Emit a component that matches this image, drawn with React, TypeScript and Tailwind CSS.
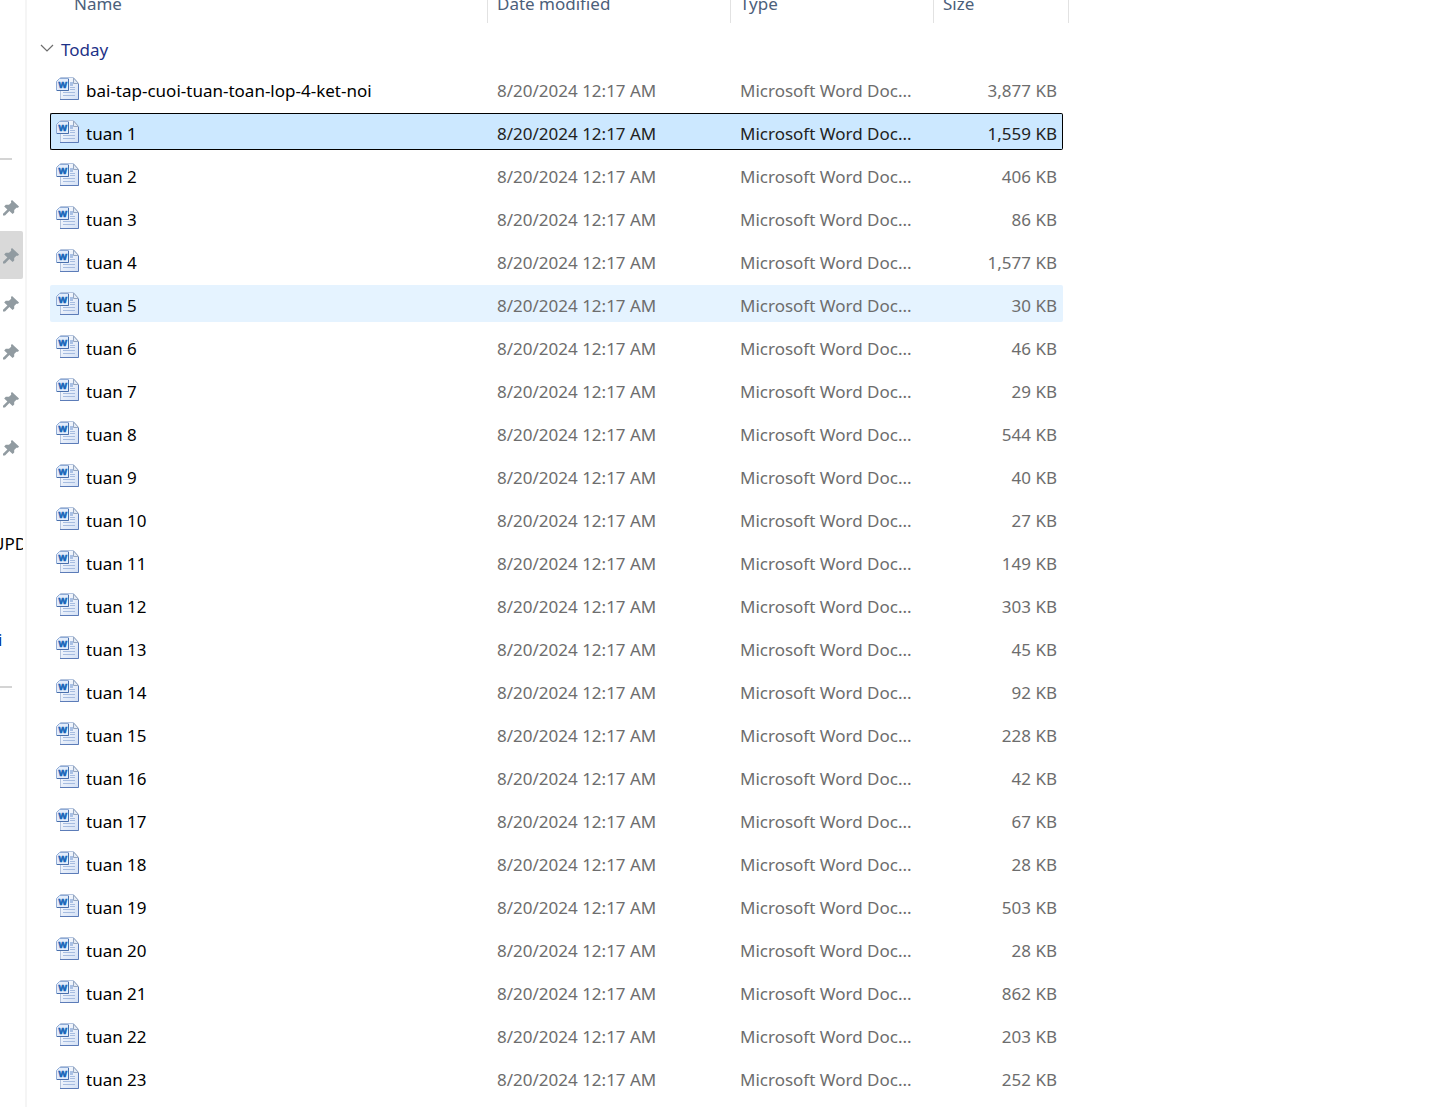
import clsx from "clsx";

interface FileRow {
  name: string;
  size: string;
}

const files: FileRow[] = [
  { name: "bai-tap-cuoi-tuan-toan-lop-4-ket-noi", size: "3,877 KB" },
  { name: "tuan 1", size: "1,559 KB" },
  { name: "tuan 2", size: "406 KB" },
  { name: "tuan 3", size: "86 KB" },
  { name: "tuan 4", size: "1,577 KB" },
  { name: "tuan 5", size: "30 KB" },
  { name: "tuan 6", size: "46 KB" },
  { name: "tuan 7", size: "29 KB" },
  { name: "tuan 8", size: "544 KB" },
  { name: "tuan 9", size: "40 KB" },
  { name: "tuan 10", size: "27 KB" },
  { name: "tuan 11", size: "149 KB" },
  { name: "tuan 12", size: "303 KB" },
  { name: "tuan 13", size: "45 KB" },
  { name: "tuan 14", size: "92 KB" },
  { name: "tuan 15", size: "228 KB" },
  { name: "tuan 16", size: "42 KB" },
  { name: "tuan 17", size: "67 KB" },
  { name: "tuan 18", size: "28 KB" },
  { name: "tuan 19", size: "503 KB" },
  { name: "tuan 20", size: "28 KB" },
  { name: "tuan 21", size: "862 KB" },
  { name: "tuan 22", size: "203 KB" },
  { name: "tuan 23", size: "252 KB" },
];

const SELECTED = "tuan 1";
const HOVERED = "tuan 5";

const WordIcon = () => (
  <svg className="size-6 shrink-0" viewBox="0 0 24 24" aria-hidden="true">
    <defs>
      <linearGradient id="page" x1="0" y1="0" x2="1" y2="1">
        <stop offset="0" stopColor="#ffffff" />
        <stop offset="1" stopColor="#d3e0f5" />
      </linearGradient>
    </defs>
    <path d="M4.5 0.5H17.5L22.5 6.5V22.5H4.5Z" fill="url(#page)" stroke="#b4c4de" />
    <path d="M4 22.5H22.5V7" fill="none" stroke="#5c7cb8" />
    <path d="M17.5 1V6.5H22.5Z" fill="#e4ebf5" stroke="#95a7c2" />
    <path d="M14 5H17V9H14Z" fill="#a9c0e4" />
    <path d="M14 10.5H19M14 12.5H19M7 15.5H19M7 18.5H19" stroke="#a6bce0" />
    <path d="M3.5 1.5H12.5V13.5H0.5V4.5Z" fill="#e3edfb" stroke="#8fabd6" />
    <path d="M12.5 2V13.5H1" fill="none" stroke="#4a70ac" />
    <text
      x="6.8"
      y="11"
      textAnchor="middle"
      fontFamily="Liberation Sans, sans-serif"
      fontSize="9"
      fontWeight="bold"
      fill="#1464b8"
      stroke="#1464b8"
      strokeWidth="0.6"
    >
      W
    </text>
  </svg>
);

const PinIcon = () => (
  <svg className="size-4" viewBox="0 0 16 16" fill="#919ba1" aria-hidden="true">
    <path d="M9 0L16 6.6L15 7.8L13.4 7.8L11.2 10L11.2 12.6L9.6 14L6.4 11L2 15.4H0V13.8L4.4 9.4L1.2 6.4L2.8 4.8L6 4.8L8.2 2.8L8 1Z" />
  </svg>
);

const Sidebar = () => {
  const pins = ["Desktop", "Downloads", "Documents", "Pictures", "Music", "Videos"];

  return (
    <nav className="w-[27px] shrink-0 overflow-hidden border-r-2 border-[#f5f5f5] pt-[158px] pr-0.5">
      <hr className="mb-[23px] w-3 border-t-2 border-[#d4d4d4]" />
      {pins.map((pin, i) => (
        <button
          key={pin}
          aria-label={pin}
          className={clsx(
            "flex h-12 w-full items-center justify-end rounded-r-xs pt-0.5 pr-1",
            i === 1 && "bg-[#d9d9d9]"
          )}
        >
          <PinIcon />
        </button>
      ))}
      <button className="mt-12 flex h-12 w-full items-center overflow-hidden pt-0.5 text-black">
        <span className="-ml-2">UPD</span>
      </button>
      <button className="mt-12 flex h-12 w-full items-center overflow-hidden pt-0.5 text-[#003399]">
        <span className="-ml-0.5">i</span>
      </button>
      <hr className="mt-[23px] w-3 border-t-2 border-[#d4d4d4]" />
    </nav>
  );
};

const FileTableRow = ({ file }: { file: FileRow }) => {
  const selected = file.name === SELECTED;
  const cell = clsx(
    "h-[37px] border-y p-0",
    selected && "border-black bg-[#cce8ff] text-[#222222]",
    !selected && "border-transparent text-[#6d6d6d]",
    file.name === HOVERED && "bg-[#e5f3ff]"
  );

  return (
    <tr aria-selected={selected}>
      <td />
      <td className={clsx(cell, "rounded-l-xs border-l")}>
        <div className="flex items-center gap-1.5 pl-[5px] text-black">
          <WordIcon />
          <span className="pt-1">{file.name}</span>
        </div>
      </td>
      <td className={cell}>
        <div className="pt-1 pl-[9px]">8/20/2024 12:17 AM</div>
      </td>
      <td className={cell}>
        <div className="pt-1 pl-[9px]">Microsoft Word Doc...</div>
      </td>
      <td className={clsx(cell, "rounded-r-xs border-r text-right")}>
        <div className="pt-1 pr-[5px]">{file.size}</div>
      </td>
      <td />
    </tr>
  );
};

const App = () => {
  const heading = "h-[37px] border-r border-[#e2e2e2] p-0 pb-0.5 text-left font-normal";

  return (
    <div className="flex h-screen overflow-hidden bg-white font-['Noto_Sans',sans-serif] text-[17px] leading-6 whitespace-nowrap">
      <Sidebar />
      <main className="min-w-0 flex-1 overflow-hidden">
        {/* the list is scrolled a little, so the header row is cut at the top */}
        <table className="-mt-5 table-fixed border-separate border-spacing-x-0 border-spacing-y-1.5">
          <colgroup>
            <col className="w-[23px]" />
            <col className="w-[438px]" />
            <col className="w-[243px]" />
            <col className="w-[203px]" />
            <col className="w-[129px]" />
            <col className="w-[6px]" />
          </colgroup>
          <thead className="text-[#4c607a]">
            <tr>
              <td />
              <th className={clsx(heading, "pl-6")}>Name</th>
              <th className={clsx(heading, "pl-[9px]")}>Date modified</th>
              <th className={clsx(heading, "pl-[9px]")}>Type</th>
              <th className={clsx(heading, "pl-[9px]")} colSpan={2}>
                Size
              </th>
            </tr>
          </thead>
          <tbody>
            <tr>
              <th colSpan={6} className="h-[35px] p-0 pt-0.5 pl-3 text-left font-normal">
                <button className="flex items-center gap-1.5 text-[#1e3287]">
                  <svg className="h-4 w-4" viewBox="0 0 16 16" fill="none" stroke="#6d6d6d" aria-hidden="true">
                    <path d="M2 5L8 11L14 5" strokeWidth="1.2" />
                  </svg>
                  <span className="pt-1">Today</span>
                </button>
              </th>
            </tr>
            {files.map((file) => (
              <FileTableRow key={file.name} file={file} />
            ))}
          </tbody>
        </table>
      </main>
    </div>
  );
};

export default App;
